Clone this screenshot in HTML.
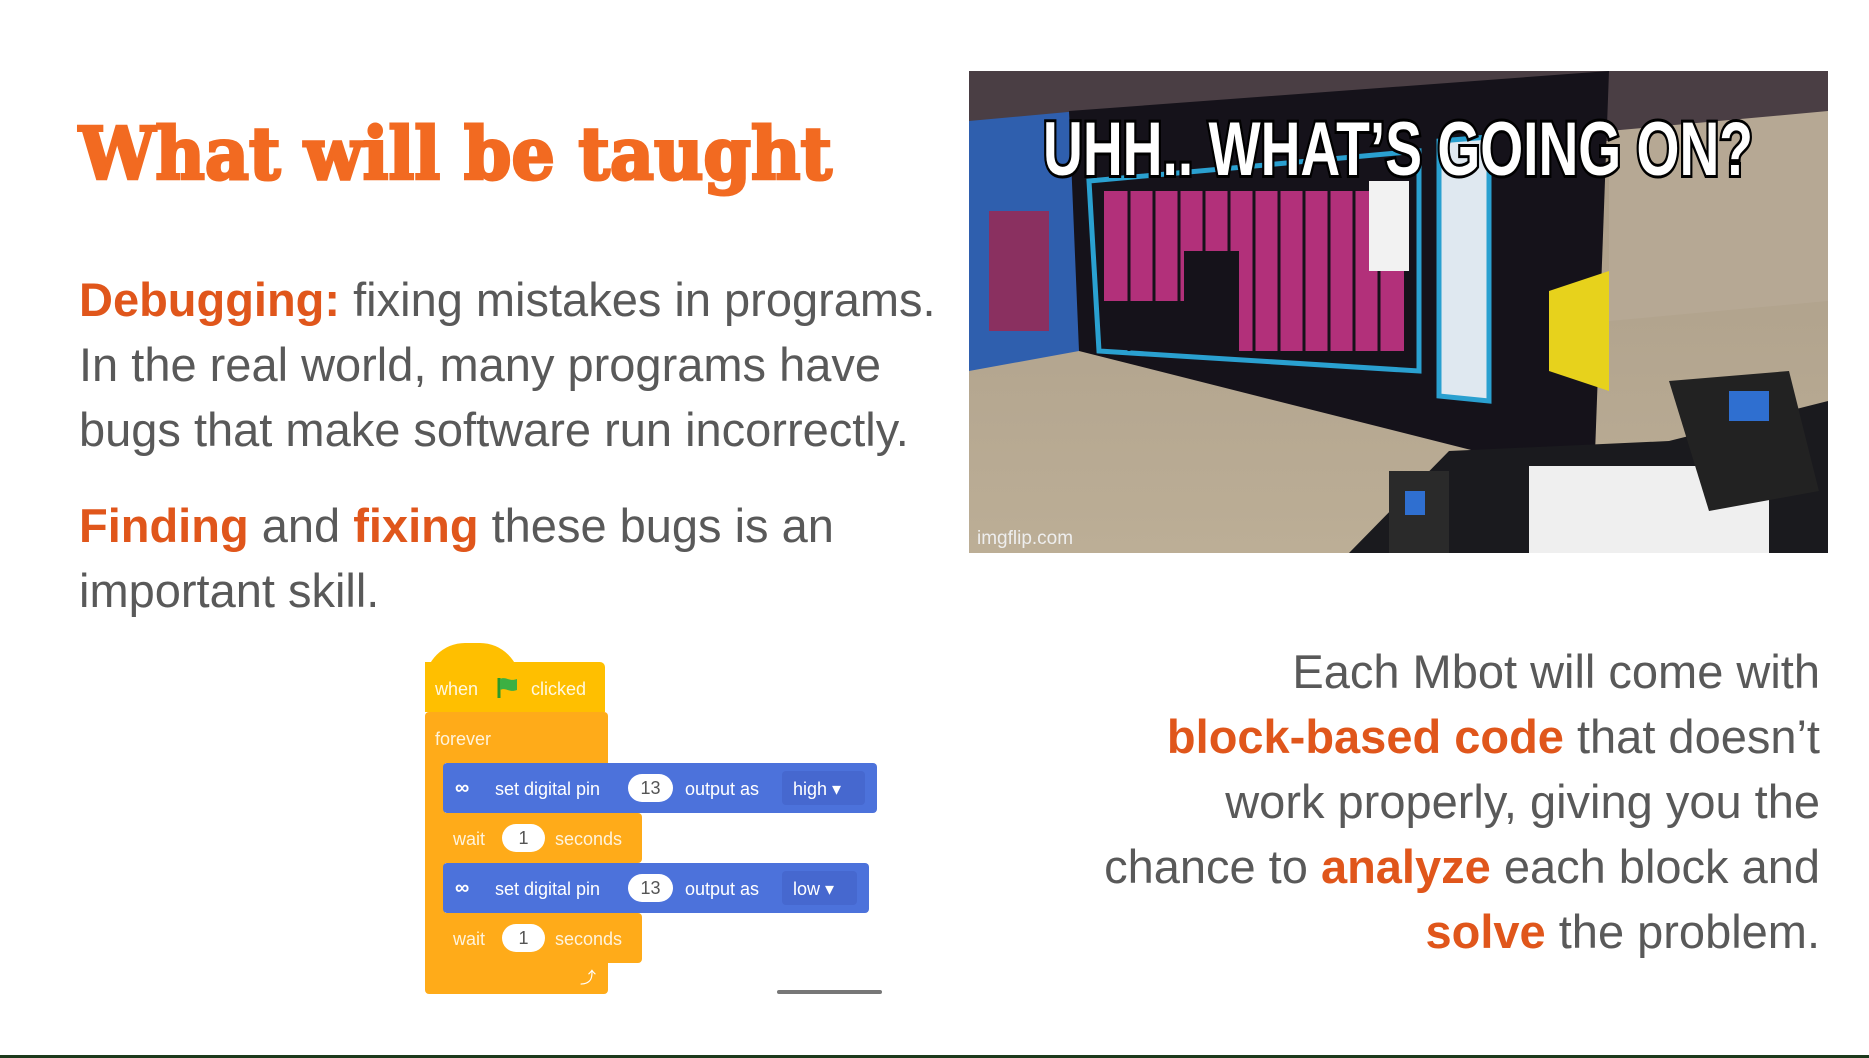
<!DOCTYPE html>
<html><head><meta charset="utf-8"><style>
*{margin:0;padding:0;box-sizing:border-box}
body{width:1869px;height:1058px;background:#fff;position:relative;overflow:hidden;font-family:"Liberation Sans",Arial,sans-serif}
.a{position:absolute;white-space:nowrap}
.t{font-size:47px;line-height:65px;color:#595959}
.o{color:#e0561b;font-weight:bold}
.title{left:79px;top:111px;font-family:"DejaVu Serif",serif;font-weight:900;font-size:72px;color:#f26a21;transform:scaleX(0.945);transform-origin:0 0;-webkit-text-stroke:3px #f26a21}
.blk{position:absolute;color:#fff;font-size:18px;line-height:1}
.pill{position:absolute;background:#fff;color:#555;border-radius:15px;text-align:center;font-size:18px;line-height:28px;height:28px}
</style></head><body>
<div class="a title">What will be taught</div>
<div class="a t" style="left:79px;top:267px"><span class="o">Debugging:</span> fixing mistakes in programs.<br>In the real world, many programs have<br>bugs that make software run incorrectly.</div>
<div class="a t" style="left:79px;top:493px"><span class="o">Finding</span> and <span class="o">fixing</span> these bugs is an<br>important skill.</div>
<div class="a t" style="right:49px;top:639px;text-align:right">Each Mbot will come with<br><span class="o">block-based code</span> that doesn’t<br>work properly, giving you the<br>chance to <span class="o">analyze</span> each block and<br><span class="o">solve</span> the problem.</div>

<svg class="a" style="left:969px;top:71px" width="859" height="482" viewBox="0 0 859 482">
<defs><linearGradient id="fl" x1="0" y1="0" x2="0" y2="1"><stop offset="0" stop-color="#a89a86"/><stop offset="1" stop-color="#bcae96"/></linearGradient></defs>
<rect width="859" height="482" fill="url(#fl)"/>
<rect width="859" height="70" fill="#4a3e44"/>
<polygon points="640,60 859,40 859,230 640,250" fill="#b6a894"/>
<polygon points="0,50 110,40 110,280 0,300" fill="#2f5fae"/>
<rect x="20" y="140" width="60" height="120" fill="#8a3060"/>
<polygon points="100,40 640,0 625,410 110,280" fill="#15121a"/>
<polygon points="120,110 450,80 450,300 130,280" fill="none" stroke="#2aa0d0" stroke-width="5"/>
<g fill="#b2307a">
<rect x="135" y="120" width="300" height="60"/>
<rect x="135" y="180" width="80" height="50"/>
<rect x="270" y="180" width="165" height="100"/>
</g>
<g stroke="#15121a" stroke-width="3">
<line x1="160" y1="115" x2="160" y2="280"/><line x1="185" y1="115" x2="185" y2="280"/><line x1="210" y1="115" x2="210" y2="280"/><line x1="235" y1="115" x2="235" y2="280"/><line x1="260" y1="115" x2="260" y2="280"/><line x1="285" y1="115" x2="285" y2="280"/><line x1="310" y1="115" x2="310" y2="280"/><line x1="335" y1="115" x2="335" y2="280"/><line x1="360" y1="115" x2="360" y2="280"/><line x1="385" y1="115" x2="385" y2="280"/><line x1="410" y1="115" x2="410" y2="280"/>
</g>
<polygon points="470,70 520,66 520,330 470,325" fill="#dfe8f0" stroke="#2aa0d0" stroke-width="5"/>
<rect x="400" y="110" width="40" height="90" fill="#f2f2f2"/>
<polygon points="580,220 640,200 640,320 580,300" fill="#e7d21c"/>
<polygon points="480,380 700,370 859,330 859,482 380,482" fill="#1a1a1e"/>
<rect x="560" y="395" width="240" height="87" fill="#efefef"/>
<polygon points="700,310 820,300 850,420 740,440" fill="#222"/>
<rect x="760" y="320" width="40" height="30" fill="#2f6fd0"/>
<rect x="420" y="400" width="60" height="82" fill="#2a2a2a"/>
<rect x="436" y="420" width="20" height="24" fill="#2f6fd0"/>
<text x="8" y="473" font-family="Liberation Sans,sans-serif" font-size="19" fill="#eee">imgflip.com</text>
<text x="429" y="104" text-anchor="middle" font-family="Liberation Sans Narrow,Liberation Sans,sans-serif" font-weight="bold" font-size="76" fill="#fff" stroke="#000" stroke-width="6" paint-order="stroke" textLength="710" lengthAdjust="spacingAndGlyphs">UHH.. WHAT’S GOING ON?</text>
</svg>

<div class="a" style="left:425px;top:643px;width:95px;height:40px;background:#ffbf00;border-radius:48px 48px 0 0"></div>
<div class="a" style="left:425px;top:662px;width:180px;height:50px;background:#ffbf00;border-radius:0 5px 0 0"></div>
<div class="blk" style="left:435px;top:680px;color:#fff8e0">when</div>
<svg class="a" style="left:496px;top:676px" width="24" height="24"><path d="M3 2v20" stroke="#2a9a2a" stroke-width="3"/><path d="M4 3c6-3 9 3 17 0v11c-8 3-11-3-17 0z" fill="#3cb043"/></svg>
<div class="blk" style="left:531px;top:680px;color:#fff8e0">clicked</div>
<div class="a" style="left:425px;top:712px;width:183px;height:51px;background:#ffab19;border-radius:4px 4px 0 0"></div>
<div class="blk" style="left:435px;top:730px;color:#fff3dc">forever</div>
<div class="a" style="left:425px;top:760px;width:20px;height:206px;background:#ffab19"></div>
<div class="a" style="left:443px;top:763px;width:434px;height:50px;background:#4c72db;border-radius:4px"></div>
<div class="blk" style="left:455px;top:778px;font-size:20px;font-weight:bold">∞</div>
<div class="blk" style="left:495px;top:780px">set digital pin</div>
<div class="pill" style="left:628px;top:774px;width:45px">13</div>
<div class="blk" style="left:685px;top:780px">output as</div>
<div class="a" style="left:782px;top:771px;width:83px;height:34px;background:#4668cf;border-radius:4px"></div>
<div class="blk" style="left:793px;top:780px">high ▾</div>
<div class="a" style="left:445px;top:813px;width:197px;height:50px;background:#ffab19;border-radius:0 4px 4px 0"></div>
<div class="blk" style="left:453px;top:830px;color:#fff3dc">wait</div>
<div class="pill" style="left:502px;top:824px;width:43px">1</div>
<div class="blk" style="left:555px;top:830px;color:#fff3dc">seconds</div>
<div class="a" style="left:443px;top:863px;width:426px;height:50px;background:#4c72db;border-radius:4px"></div>
<div class="blk" style="left:455px;top:878px;font-size:20px;font-weight:bold">∞</div>
<div class="blk" style="left:495px;top:880px">set digital pin</div>
<div class="pill" style="left:628px;top:874px;width:45px">13</div>
<div class="blk" style="left:685px;top:880px">output as</div>
<div class="a" style="left:782px;top:871px;width:75px;height:34px;background:#4668cf;border-radius:4px"></div>
<div class="blk" style="left:793px;top:880px">low ▾</div>
<div class="a" style="left:445px;top:913px;width:197px;height:50px;background:#ffab19;border-radius:0 4px 4px 0"></div>
<div class="blk" style="left:453px;top:930px;color:#fff3dc">wait</div>
<div class="pill" style="left:502px;top:924px;width:43px">1</div>
<div class="blk" style="left:555px;top:930px;color:#fff3dc">seconds</div>
<div class="a" style="left:425px;top:963px;width:183px;height:31px;background:#ffab19;border-radius:0 0 4px 4px"></div>
<div class="blk" style="left:580px;top:971px;font-size:16px">⤴</div>
<div class="a" style="left:777px;top:990px;width:105px;height:4px;background:#777;border-radius:2px"></div>
<div class="a" style="left:0;top:1055px;width:1869px;height:3px;background:#1c3a1c"></div>
</body></html>
